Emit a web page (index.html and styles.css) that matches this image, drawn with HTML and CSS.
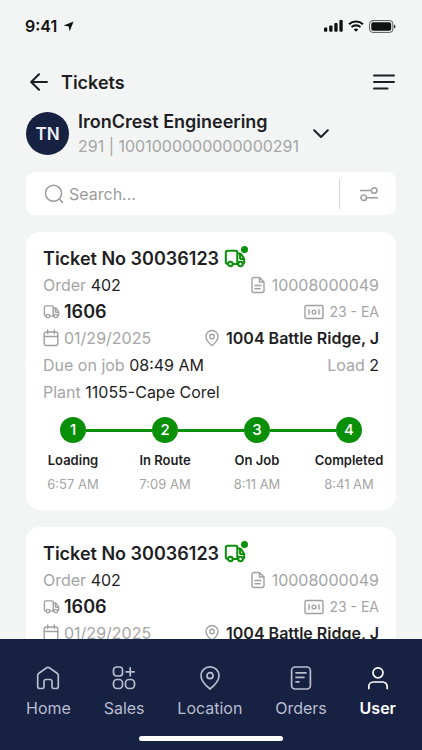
FILE: index.html
```html
<!DOCTYPE html>
<html lang="en">
<head>
    <meta charset="UTF-8">
    <meta name="viewport" content="width=device-width, initial-scale=1.0">
    <title>Tickets</title>
    <link rel="stylesheet" href="styles.css">
</head>
<body>
    <!-- Shared icons -->
    <svg class="sprite">
        <symbol id="truck" viewBox="0 0 24 24">
            <path d="M4.5 18.5H4A2 2 0 0 1 2 16.500V6a2 2 0 0 1 2-2h9a1.500 1.500 0 0 1 1.500 1.500V18.500H9.500M14.500 7h2.700a2 2 0 0 1 1.800 1.100L22 13v4a1.500 1.500 0 0 1-1.500 1.500M14.500 18.500h1M17.500 7.500V12a1 1 0 0 0 1 1H22"/>
            <circle cx="7" cy="18.500" r="2.500"/>
            <circle cx="18" cy="18.500" r="2.500"/>
        </symbol>
        <symbol id="doc" viewBox="0 0 16 18">
            <path d="M4 1.500h5.500L14 6v8.500a2 2 0 0 1-2 2H4a2 2 0 0 1-2-2v-11a2 2 0 0 1 2-2zM9.500 1.500V6H14M5 9.500h6M5 12.700h5"/>
        </symbol>
        <symbol id="money" viewBox="0 0 20 16">
            <rect x="1" y="1.500" width="18" height="13" rx="1.500"/>
            <circle cx="10" cy="8" r="1.900"/>
            <path d="M5 5.800v4.400M15 5.800v4.400"/>
        </symbol>
        <symbol id="calendar" viewBox="0 0 16 18">
            <rect x="1.200" y="3" width="13.600" height="13.500" rx="2"/>
            <path d="M1.200 7.500h13.600M4.700 1v3.500M11.300 1v3.500"/>
        </symbol>
        <symbol id="pin" viewBox="0 0 24 24">
            <path d="M12 22c2.500-2 8-7 8-12A8 8 0 0 0 4 10c0 5 5.500 10 8 12z"/>
            <circle cx="12" cy="10" r="3"/>
        </symbol>
    </svg>

    <div class="app">
        <div class="status-bar">
            <span class="clock">9:41</span>
            <svg class="arrow" viewBox="0 0 12 12"><path d="M11.500 .5L7.300 11.300 6.200 5.900.6 4.800z"/></svg>
            <svg class="signal" viewBox="0 0 19 12">
                <rect x="0" y="7.500" width="3.300" height="4.200" rx="1"/>
                <rect x="5.200" y="5.400" width="3.300" height="6.300" rx="1"/>
                <rect x="10.300" y="3" width="3.300" height="8.700" rx="1"/>
                <rect x="15.400" y="0" width="3.300" height="11.700" rx="1"/>
            </svg>
            <svg class="wifi" viewBox="0 0 16 12">
                <path d="M1 4.200a10.300 10.300 0 0 1 14 0M3.500 7.100a6.600 6.600 0 0 1 9 0"/>
                <path class="fill" d="M8 11.800L5.700 9.500a3.300 3.300 0 0 1 4.600 0z"/>
            </svg>
            <svg class="battery" viewBox="0 0 27 13">
                <rect class="shell" x=".6" y=".6" width="23.300" height="11.800" rx="3.200"/>
                <rect x="2.300" y="2.300" width="19.900" height="8.400" rx="1.800"/>
                <path d="M25.100 4.500a2.200 2.200 0 0 1 0 4z"/>
            </svg>
        </div>

        <header class="header">
            <svg class="back" viewBox="0 0 18 18"><path d="M17 9H1.500M9 1.200L1.200 9 9 16.800"/></svg>
            <h1>Tickets</h1>
            <svg class="menu" viewBox="0 0 22 16"><path d="M1 1.500h20M1 8h20M1 14.500h13.500"/></svg>
        </header>

        <div class="company">
            <div class="avatar">TN</div>
            <div class="company-info">
                <div class="company-name">IronCrest Engineering</div>
                <div class="company-id">291 | 1001000000000000291</div>
            </div>
            <svg class="chevron" viewBox="0 0 16 10"><path d="M1.200 1.200L8 8l6.800-6.800"/></svg>
        </div>

        <div class="search">
            <svg class="search-icon" viewBox="0 0 20 20"><circle cx="9.500" cy="9.300" r="8"/><path d="M15.500 15.300l2.800 2.800"/></svg>
            <span class="search-text">Search...</span>
            <div class="divider"></div>
            <svg class="filter" viewBox="0 0 18 16">
                <path d="M.5 4.500h10.700M7 11.700h10.500"/>
                <circle cx="14.200" cy="4.500" r="2.800"/>
                <circle cx="3.700" cy="11.700" r="2.800"/>
            </svg>
        </div>

        <main class="tickets">
            <section class="card">
                <div class="row title-row">
                    <h2>Ticket No 30036123</h2>
                    <span class="truck-status"><svg><use href="#truck"/></svg></span>
                </div>
                <div class="row">
                    <span class="muted">Order <b>402</b></span>
                    <span class="right muted"><svg class="icon icon-doc"><use href="#doc"/></svg>10008000049</span>
                </div>
                <div class="row">
                    <span class="truck-no"><svg class="icon icon-truck"><use href="#truck"/></svg>1606</span>
                    <span class="right muted amount"><svg class="icon icon-money"><use href="#money"/></svg>23 - EA</span>
                </div>
                <div class="row">
                    <span class="muted date"><svg class="icon icon-calendar"><use href="#calendar"/></svg>01/29/2025</span>
                    <span class="right address"><svg class="icon icon-pin"><use href="#pin"/></svg>1004 Battle Ridge, J</span>
                </div>
                <div class="row">
                    <span class="muted">Due on job <b>08:49 AM</b></span>
                    <span class="right muted">Load&nbsp;<b>2</b></span>
                </div>
                <div class="row">
                    <span class="muted plant">Plant <b>11055-Cape Corel</b></span>
                </div>
                <div class="steps">
                    <div class="step">
                        <div class="track"><span class="dot">1</span></div>
                        <div class="step-name">Loading</div>
                        <div class="step-time">6:57 AM</div>
                    </div>
                    <div class="step">
                        <div class="track"><span class="dot">2</span></div>
                        <div class="step-name">In Route</div>
                        <div class="step-time">7:09 AM</div>
                    </div>
                    <div class="step">
                        <div class="track"><span class="dot">3</span></div>
                        <div class="step-name">On Job</div>
                        <div class="step-time">8:11 AM</div>
                    </div>
                    <div class="step">
                        <div class="track"><span class="dot">4</span></div>
                        <div class="step-name">Completed</div>
                        <div class="step-time">8:41 AM</div>
                    </div>
                </div>
            </section>

            <section class="card">
                <div class="row title-row">
                    <h2>Ticket No 30036123</h2>
                    <span class="truck-status"><svg><use href="#truck"/></svg></span>
                </div>
                <div class="row">
                    <span class="muted">Order <b>402</b></span>
                    <span class="right muted"><svg class="icon icon-doc"><use href="#doc"/></svg>10008000049</span>
                </div>
                <div class="row">
                    <span class="truck-no"><svg class="icon icon-truck"><use href="#truck"/></svg>1606</span>
                    <span class="right muted amount"><svg class="icon icon-money"><use href="#money"/></svg>23 - EA</span>
                </div>
                <div class="row">
                    <span class="muted date"><svg class="icon icon-calendar"><use href="#calendar"/></svg>01/29/2025</span>
                    <span class="right address"><svg class="icon icon-pin"><use href="#pin"/></svg>1004 Battle Ridge, J</span>
                </div>
            </section>
        </main>

        <nav class="nav">
            <div class="nav-items">
                <a class="nav-item">
                    <svg viewBox="0 0 24 24"><path d="M10.200 2L2.600 7.500a2 2 0 0 0-.9 1.700V20.500a2 2 0 0 0 2 2H6.500a1.500 1.500 0 0 0 1.500-1.500v-5.500a2 2 0 0 1 2-2h4a2 2 0 0 1 2 2V21a1.500 1.500 0 0 0 1.500 1.500h2.800a2 2 0 0 0 2-2V9.200a2 2 0 0 0-.9-1.700L13.800 2a3 3 0 0 0-3.600 0z"/></svg>
                    Home
                </a>
                <a class="nav-item">
                    <svg viewBox="0 0 24 24">
                        <rect x="1.500" y="1" width="9" height="9" rx="3"/>
                        <rect x="1.500" y="13.500" width="9" height="9" rx="3.500"/>
                        <rect x="13.500" y="13.500" width="9" height="9" rx="3.500"/>
                        <path d="M18.200 1.800v8M14.200 5.800h8"/>
                    </svg>
                    Sales
                </a>
                <a class="nav-item">
                    <svg viewBox="0 0 24 24"><path d="M12 23c2.700-2.200 9-7.500 9-13.300A9 8.800 0 0 0 3 9.700C3 15.500 9.300 20.800 12 23z"/><circle cx="12" cy="9.700" r="3"/></svg>
                    Location
                </a>
                <a class="nav-item">
                    <svg viewBox="0 0 24 24"><rect x="2.600" y="1" width="18.800" height="22" rx="3.500"/><path d="M7 6.800h10M7 11.300h8M7 15.800h3"/></svg>
                    Orders
                </a>
                <a class="nav-item active">
                    <svg viewBox="0 0 24 24"><circle cx="12" cy="6.800" r="5"/><path d="M2.800 22.500V20.500a4.500 4.500 0 0 1 4.500-4.500h9.400a4.500 4.500 0 0 1 4.500 4.500V22.500"/></svg>
                    User
                </a>
            </div>
            <div class="home-indicator"></div>
        </nav>
    </div>
</body>
</html>
```
FILE: styles.css
```css
* {
    margin: 0;
    padding: 0;
    box-sizing: border-box;
}

body {
    font-family: Inter, "Liberation Sans", sans-serif;
    background-color: #f3f5f5;
    color: #1e1e24;
}

svg {
    flex-shrink: 0;
    fill: none;
    stroke: currentColor;
    stroke-linecap: round;
    stroke-linejoin: round;
}

.sprite {
    display: block;
    width: 0;
    height: 0;
}

.app {
    display: flex;
    flex-direction: column;
    width: 422px;
    height: 750px;
    overflow: hidden;
}

/* Status bar */
.status-bar {
    display: flex;
    align-items: center;
    height: 52px;
    padding: 0 26px 0 25px;
    color: #111;
    flex-shrink: 0;
}

.status-bar svg {
    fill: currentColor;
    stroke: none;
}

.clock {
    font-size: 16px;
    font-weight: 600;
}

.arrow {
    width: 11px;
    height: 11px;
    margin-left: 6px;
}

.signal {
    width: 19px;
    height: 12px;
    margin-left: auto;
}

.status-bar .wifi {
    width: 16px;
    height: 12px;
    margin: 0 5px;
    fill: none;
    stroke: currentColor;
    stroke-width: 2.1;
    stroke-linecap: butt;
}

.wifi .fill {
    fill: currentColor;
    stroke: none;
}

.battery {
    width: 27px;
    height: 13px;
}

.battery .shell {
    fill: none;
    stroke: #555;
    stroke-width: 1;
}

/* Header */
.header {
    display: flex;
    align-items: center;
    height: 60px;
    padding: 0 27px 0 30px;
    flex-shrink: 0;
}

.header svg {
    stroke-width: 2;
}

.back {
    width: 18px;
    height: 18px;
}

h1 {
    margin-left: 13px;
    font-size: 18px;
    font-weight: 600;
}

.menu {
    width: 22px;
    height: 16px;
    margin-left: auto;
}

/* Company */
.company {
    display: flex;
    align-items: center;
    height: 43px;
    margin: 0 26px;
    flex-shrink: 0;
}

.avatar {
    width: 43px;
    height: 43px;
    border-radius: 50%;
    background-color: #172142;
    color: #eef0f6;
    font-size: 17px;
    font-weight: 600;
    line-height: 44px;
    text-align: center;
}

.company-info {
    margin-left: 9px;
    line-height: 24px;
    white-space: nowrap;
}

.company-name {
    font-size: 18px;
    font-weight: 600;
}

.company-id {
    color: #a5a5a5;
    font-size: 16px;
}

.chevron {
    width: 16px;
    height: 10px;
    margin-left: 14px;
    stroke-width: 2;
}

/* Search */
.search {
    display: flex;
    align-items: center;
    height: 43px;
    margin: 17px 26px;
    padding: 0 18px;
    border-radius: 9px;
    background-color: #fff;
    color: #9b9b9b;
    flex-shrink: 0;
}

.search-icon {
    width: 20px;
    height: 20px;
    stroke-width: 1.5;
}

.search-text {
    margin-left: 5px;
    font-size: 16px;
}

.divider {
    width: 1px;
    height: 30px;
    margin-left: auto;
    background-color: #d5d5d5;
}

.filter {
    width: 18px;
    height: 16px;
    margin-left: 20px;
    stroke-width: 1.4;
}

/* Tickets */
.tickets {
    flex: 1;
    min-height: 0;
    overflow: hidden;
    padding: 0 26px;
}

.card {
    height: 278px;
    margin-bottom: 17px;
    padding-top: 13px;
    border-radius: 14px;
    background-color: #fff;
}

.row {
    display: flex;
    align-items: center;
    height: 26.7px;
    padding: 0 17px;
    font-size: 16px;
    white-space: nowrap;
}

.row > span {
    display: flex;
    align-items: center;
    white-space: pre;
}

.row .right {
    margin-left: auto;
}

.muted {
    color: #a5a5a5;
}

.muted b {
    color: #1e1e24;
    font-weight: 400;
}

h2 {
    font-size: 18px;
    font-weight: 600;
}

.truck-status {
    position: relative;
    margin-left: 5px;
    color: #0a8f08;
}

.truck-status svg {
    width: 22px;
    height: 22px;
    stroke-width: 2.2;
}

.truck-status::after {
    content: "";
    position: absolute;
    top: -1px;
    right: -2px;
    width: 7px;
    height: 7px;
    border-radius: 50%;
    background-color: #0a8f08;
}

.icon {
    color: #a0a0a0;
    stroke-width: 1.4;
}

.icon-doc {
    width: 16px;
    height: 18px;
    margin-right: 6px;
}

.icon-truck {
    width: 17px;
    height: 17px;
    margin-right: 4px;
    stroke-width: 2;
}

.icon-money {
    width: 20px;
    height: 16px;
    margin-right: 5px;
}

.icon-calendar {
    width: 16px;
    height: 18px;
    margin-right: 5px;
}

.icon-pin {
    width: 18px;
    height: 18px;
    margin-right: 5px;
    stroke-width: 1.8;
}

.truck-no {
    font-size: 18px;
    font-weight: 600;
}

.amount {
    font-size: 14px;
}

.address {
    font-weight: 600;
}

/* Progress steps */
.steps {
    display: grid;
    grid-template-columns: repeat(4, 92px);
    margin: 12px 1px 0;
    text-align: center;
}

.track {
    display: flex;
    align-items: center;
}

.track::before,
.track::after {
    content: "";
    flex: 1;
    height: 3px;
    background-color: #0a8f08;
}

.step:first-child .track::before,
.step:last-child .track::after {
    background-color: transparent;
}

.dot {
    width: 26px;
    height: 26px;
    border-radius: 50%;
    background-color: #0a8f08;
    color: #fff;
    font-size: 15px;
    font-weight: 500;
    line-height: 26px;
}

.step-name {
    margin-top: 8px;
    font-size: 13px;
    font-weight: 600;
    line-height: 18px;
}

.step-time {
    margin-top: 6px;
    color: #a5a5a5;
    font-size: 13px;
    line-height: 18px;
}

/* Bottom navigation */
.nav {
    height: 111px;
    padding-top: 27px;
    background-color: #172142;
    color: #b9bdd0;
    flex-shrink: 0;
}

.nav-items {
    display: flex;
    justify-content: space-between;
    padding: 0 26px;
}

.nav-item {
    display: flex;
    flex-direction: column;
    align-items: center;
    gap: 8px;
    font-size: 16px;
    line-height: 20px;
}

.nav-item svg {
    width: 24px;
    height: 24px;
    stroke-width: 1.7;
}

.nav-item.active {
    color: #fff;
    font-weight: 600;
}

.home-indicator {
    width: 144px;
    height: 5px;
    margin: 18px auto 0;
    border-radius: 3px;
    background-color: #fff;
}
```
